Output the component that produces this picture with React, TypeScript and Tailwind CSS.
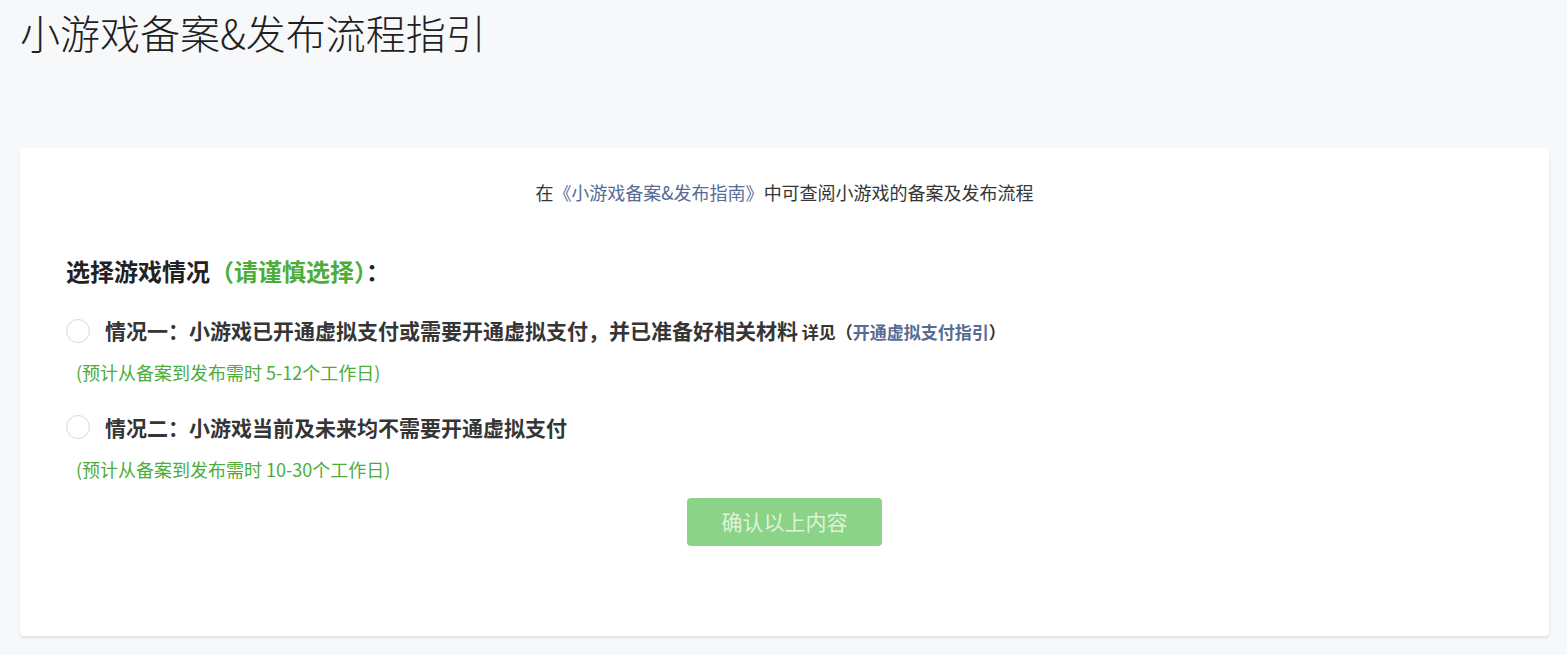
export default function App() {
  return (
    <div
      className="min-h-[655px] bg-[#f7f8fa] pb-5 pl-5 pr-[18px] text-[#353535]"
      style={{ fontFamily: '"Noto Sans CJK SC", "Noto Sans", sans-serif' }}
    >
      <h1 className="pt-[8px] text-[40px] font-light leading-[48px] text-[#1f1f1f]">
        小游戏备案&amp;发布流程指引
      </h1>
      <div className="mt-[92px] rounded-[4px] bg-white px-[46px] pb-[90px] pt-[30px] shadow-[0_2px_3px_rgba(0,0,0,0.1)]">
        <p className="text-center text-[18px] leading-[28px]">
          在<a className="text-[#576b95]">《小游戏备案&amp;发布指南》</a>中可查阅小游戏的备案及发布流程
        </p>
        <h2 className="mt-[49px] text-[24px] font-bold leading-[32px] text-[#222]">
          选择游戏情况<span className="text-[#4cad3a]">（请谨慎选择）</span>：
        </h2>
        <div className="mt-[31px]">
          <label className="flex items-center gap-[15px]">
            <span className="h-[24px] w-[24px] shrink-0 rounded-full border border-[#d9d9d9] bg-white" />
            <span className="text-[21px] font-bold leading-[24px]">
              情况一：小游戏已开通虚拟支付或需要开通虚拟支付，并已准备好相关材料
              <span className="text-[17px]"> 详见（<a className="text-[#576b95]">开通虚拟支付指引</a>）</span>
            </span>
          </label>
          <p className="mt-[16px] pl-[10px] text-[18px] leading-[24px] text-[#4cad3a]">
            (预计从备案到发布需时 5-12个工作日)
          </p>
        </div>
        <div className="mt-[31px]">
          <label className="flex items-center gap-[15px]">
            <span className="h-[24px] w-[24px] shrink-0 rounded-full border border-[#d9d9d9] bg-white" />
            <span className="text-[21px] font-bold leading-[24px]">
              情况二：小游戏当前及未来均不需要开通虚拟支付
            </span>
          </label>
          <p className="mt-[18px] pl-[10px] text-[18px] leading-[24px] text-[#4cad3a]">
            (预计从备案到发布需时 10-30个工作日)
          </p>
        </div>
        <div className="mt-[17px] flex justify-center">
          <button className="h-[48px] w-[195px] rounded-[4px] bg-[#8bd386] text-[21px] text-[#def3dc]">
            确认以上内容
          </button>
        </div>
      </div>
    </div>
  );
}
